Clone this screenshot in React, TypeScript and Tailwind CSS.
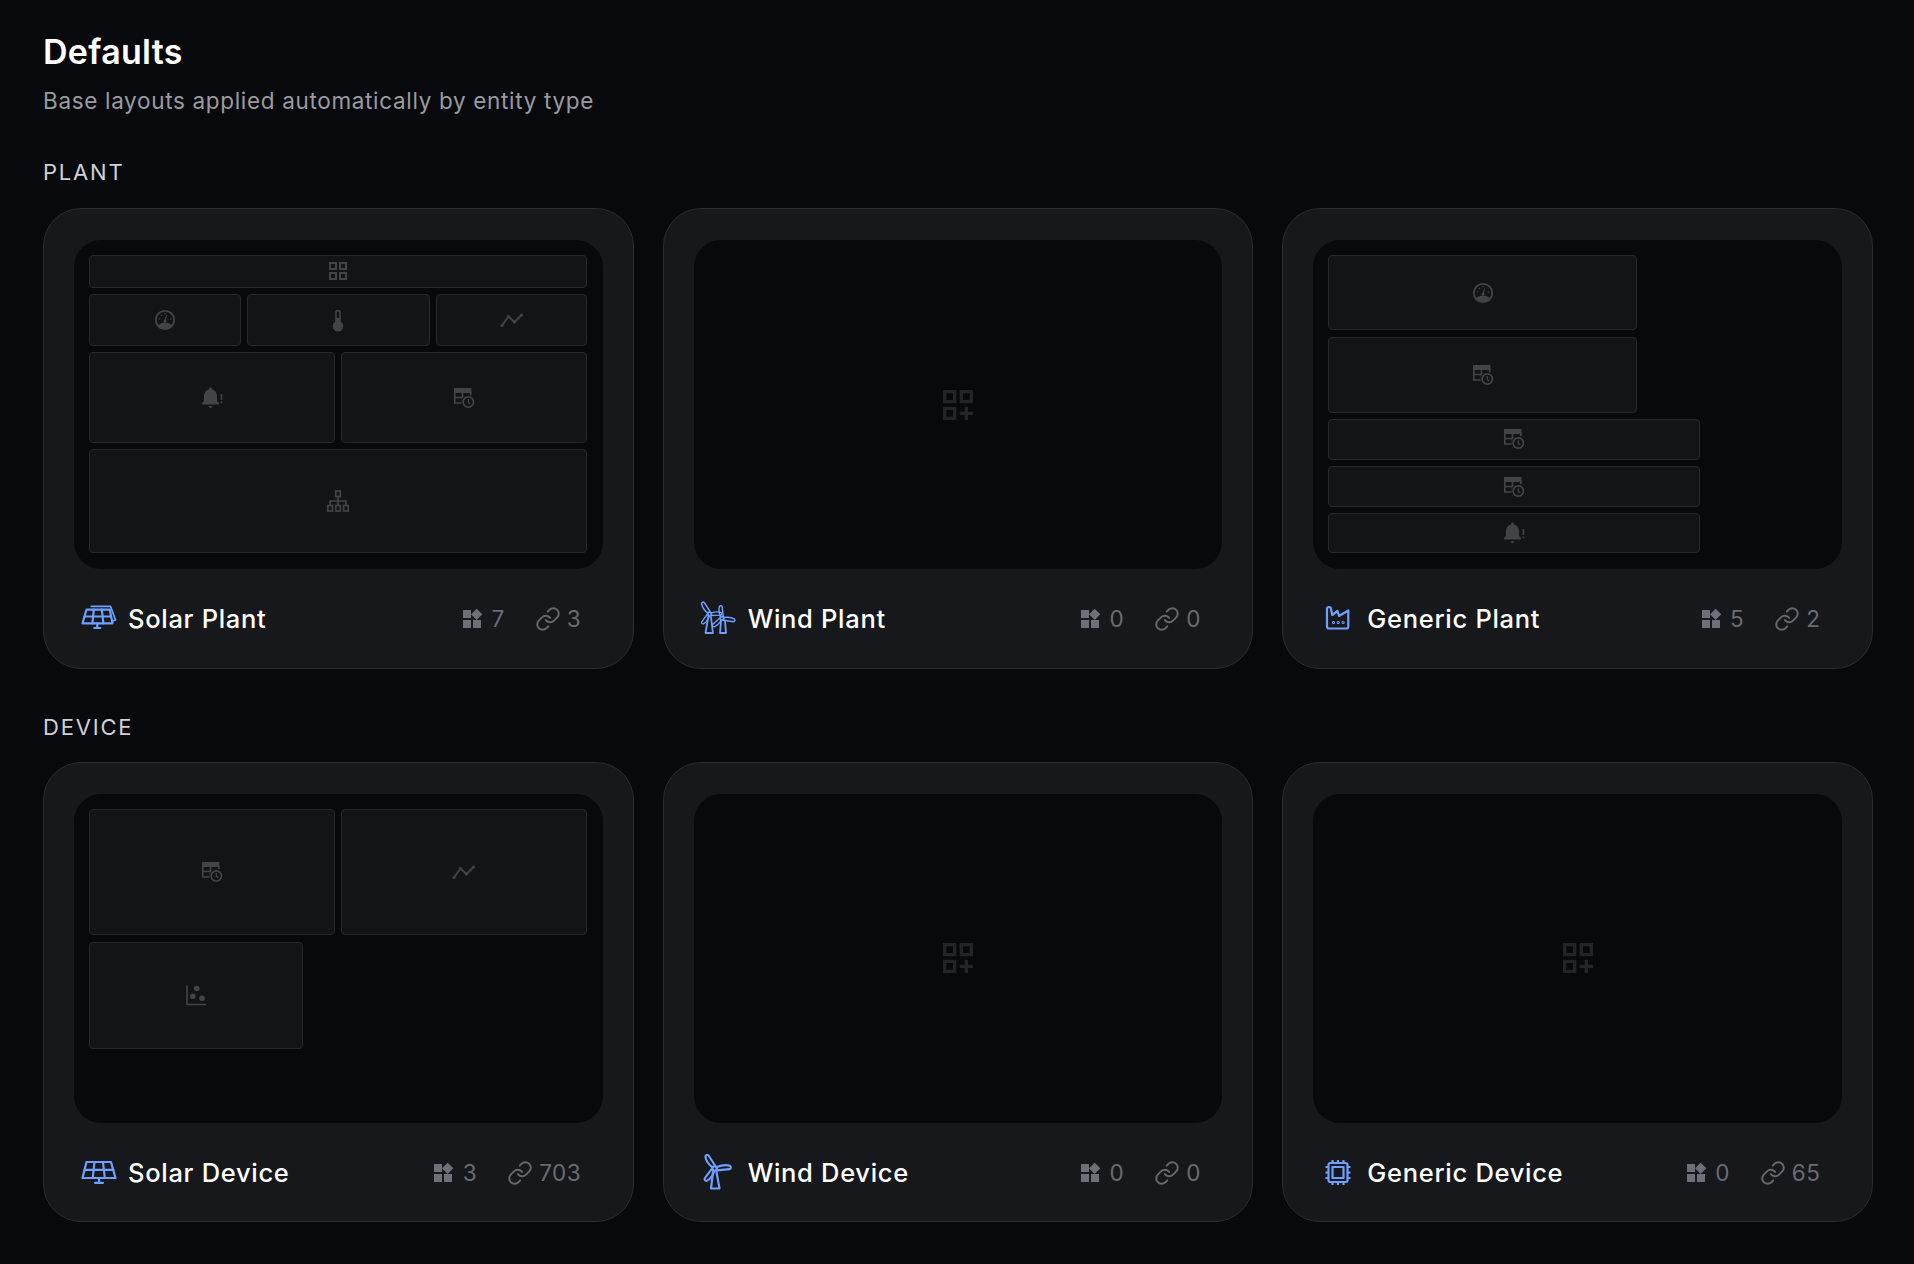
import React from "react";

const Svg = ({ children, size = 24, className = "" }: { children: React.ReactNode; size?: number; className?: string }) => (
  <svg viewBox="0 0 24 24" width={size} height={size} fill="currentColor" className={className}>{children}</svg>
);

const GridView = () => (
  <Svg><path d="M3 3v8h8V3H3zm6 6H5V5h4v4zm-6 4v8h8v-8H3zm6 6H5v-4h4v4zm4-16v8h8V3h-8zm6 6h-4V5h4v4zm-6 4v8h8v-8h-8zm6 6h-4v-4h4v4z" /></Svg>
);
const Gauge = () => (
  <Svg>
    <circle cx="12" cy="12" r="9.200" fill="none" stroke="currentColor" strokeWidth="1.800" />
    <path d="M5.200 17.600c1.600-2 4-3.200 6.800-3.200s5.200 1.200 6.800 3.200A9 9 0 0 1 12 21a9 9 0 0 1-6.800-3.400z" />
    <path d="M11.200 12.500l2.200-5.500 .8.300-1.600 5.700z" />
    <circle cx="12" cy="13" r="1.500" />
    <circle cx="6.500" cy="11" r=".8" /><circle cx="8.500" cy="7.500" r=".8" /><circle cx="12" cy="5.800" r=".8" /><circle cx="17.500" cy="11" r=".8" />
  </Svg>
);
const Thermo = () => (
  <Svg>
    <path fillRule="evenodd" d="M12 1.800a2.800 2.800 0 0 1 2.800 2.800v9.100a5.300 5.300 0 1 1-5.600 0V4.600A2.800 2.800 0 0 1 12 1.800zm0 1.600a1.200 1.200 0 0 0-1.200 1.200V10h2.400V4.600A1.200 1.200 0 0 0 12 3.400z" />
  </Svg>
);
const Trend = () => (
  <Svg>
    <path d="M2 17.500L8.500 8.500l6 5.500L21.500 7" fill="none" stroke="currentColor" strokeWidth="2" />
    <circle cx="2" cy="17.500" r="1.600" /><circle cx="8.500" cy="8.500" r="1.600" /><circle cx="14.500" cy="14" r="1.600" /><circle cx="21.500" cy="7" r="1.600" />
  </Svg>
);
const BellAlert = () => (
  <Svg>
    <path d="M10.500 1.500c.8 0 1.500.7 1.500 1.500v.5c2.900.7 5 3.300 5 6.400V15l2 2v1.500H2V17l2-2V9.900c0-3.100 2.100-5.700 5-6.400V3c0-.8.7-1.500 1.500-1.500zM8.500 20h4a2 2 0 0 1-4 0z" />
    <rect x="20.600" y="8" width="1.700" height="6" /><rect x="20.600" y="15.500" width="1.700" height="1.800" />
  </Svg>
);
const TableClock = () => (
  <Svg>
    <path d="M2 2h17.400v5H2z" />
    <path d="M2.800 5.500v11.500h9M18.700 5.500v4M10.500 5.500v11.500M2.800 11.500h15" fill="none" stroke="currentColor" strokeWidth="1.700" />
    <circle cx="16.300" cy="16" r="6.900" fill="#121418" />
    <circle cx="16.300" cy="16" r="5.200" fill="none" stroke="currentColor" strokeWidth="1.700" />
    <path d="M16.300 13v3.300l2 1.500" fill="none" stroke="currentColor" strokeWidth="1.300" />
  </Svg>
);
const Sitemap = () => (
  <Svg>
    <g fill="none" stroke="currentColor" strokeWidth="1.700">
      <rect x="9.700" y="2" width="4.600" height="5.500" />
      <rect x="1.800" y="16.500" width="4.600" height="5.500" />
      <rect x="9.700" y="16.500" width="4.600" height="5.500" />
      <rect x="17.600" y="16.500" width="4.600" height="5.500" />
      <path d="M12 7.500v9M4.100 16.500V12h15.800v4.500" />
    </g>
  </Svg>
);
const Scatter = () => (
  <Svg>
    <path d="M3 2.500v19h19" fill="none" stroke="currentColor" strokeWidth="1.700" />
    <circle cx="12.700" cy="5.500" r="2.800" /><circle cx="8.800" cy="13.300" r="2.800" /><circle cx="18" cy="15.300" r="2.800" />
  </Svg>
);

const Widgets = () => (
  <Svg className="shrink-0"><path d="M13 13v8h8v-8h-8zM3 21h8v-8H3v8zM3 3v8h8V3H3zm13.660-1.310L11 7.340 16.660 13l5.660-5.660-5.660-5.650z" /></Svg>
);
const LinkIco = () => (
  <svg viewBox="0 0 24 24" width={26} height={26} fill="none" stroke="currentColor" strokeWidth={1.8} strokeLinecap="round" strokeLinejoin="round" className="shrink-0">
    <path d="M10 13a5 5 0 0 0 7.540.54l3-3a5 5 0 0 0-7.070-7.070l-1.720 1.710" />
    <path d="M14 11a5 5 0 0 0-7.540-.54l-3 3a5 5 0 0 0 7.070 7.070l1.710-1.710" />
  </svg>
);

const Box = ({ children }: { children: React.ReactNode }) => (
  <svg viewBox="0 0 38 38" width={38} height={38} fill="none" stroke="currentColor" strokeWidth={2.2} strokeLinejoin="round" strokeLinecap="round" className="shrink-0 text-[#70a0ff]">{children}</svg>
);

const SolarDevice = () => (
  <Box>
    <path d="M6.500 8h24.500l4.500 16H2.500z" />
    <path d="M4.500 15.800h29M14.500 8l-1.800 16M23 8l1.800 16M19 24v4.500M15 28.800h8" />
  </Box>
);
const SolarPlant = () => (
  <Box>
    <path d="M6.500 9.700h23.300l2.700 13.600H2.500z" />
    <path d="M4.500 16.500h26.500M13.800 9.700l-1.400 13.600M21.800 9.700l1.600 13.600M17.300 23.300v4.400M14.300 28h6" />
    <path d="M11.300 6.300h19.200l5 13.700-3 1" strokeWidth={1.700} />
  </Box>
);

const Blade = ({ x, y, a, l }: { x: number; y: number; a: number; l: number }) => (
  <path
    transform={`translate(${x} ${y}) rotate(${a}) scale(${l / 16})`}
    d="M-1.500 -2.500C-3 -7 -3.200 -12 -1.800 -15.500C-.5 -16.800 1.200 -16.200 1.600 -14.800L2 -2.500"
  />
);
const WindDevice = () => (
  <Box>
    <Blade x={15.600} y={14.600} a={-31} l={15.500} />
    <Blade x={15.600} y={14.600} a={86} l={16} />
    <Blade x={15.600} y={14.600} a={219} l={15} />
    <circle cx="15.600" cy="14.600" r="2.200" />
    <path d="M14 18l-2 16.500h8.500L17.500 18" />
  </Box>
);
const WindPlant = () => (
  <Box>
    <g strokeWidth={1.800}>
      <Blade x={10.600} y={14} a={-31} l={13.500} />
      <Blade x={10.600} y={14} a={90} l={12} />
      <Blade x={10.600} y={14} a={219} l={12} />
      <circle cx="10.600" cy="14" r="1.800" />
      <path d="M9.300 17l-2.800 16h7.400L12 17" />
      <Blade x={22.900} y={18.300} a={-5} l={12.500} />
      <Blade x={22.900} y={18.300} a={100} l={13} />
      <Blade x={22.900} y={18.300} a={230} l={12} />
      <circle cx="22.900" cy="18.300" r="1.800" />
      <path d="M22 21l-1 12h6l-1-12" />
    </g>
  </Box>
);
const Factory = () => (
  <Box>
    <path d="M8 9a2 2 0 0 1 4 0l1.200 6 5.300-4 1.500 5 9.300-5.500v16a2 2 0 0 1-2 2H10a2 2 0 0 1-2-2z" />
    <circle cx="14.400" cy="22.500" r=".5" /><circle cx="19.200" cy="22.500" r=".5" /><circle cx="24.100" cy="22.500" r=".5" />
  </Box>
);
const Chip = () => (
  <Box>
    <g strokeLinecap="butt">
      <rect x="9.500" y="9" width="19" height="19" rx="2" />
      <rect x="13.500" y="13" width="11" height="11" />
      <path d="M6.500 13h3M6.500 18.500h3M6.500 24h3M28.500 13h3M28.500 18.500h3M28.500 24h3M13.500 6v3M19 6v3M24.500 6v3M13.500 28v3M19 28v3M24.500 28v3" />
    </g>
  </Box>
);

const Empty = () => (
  <div className="flex flex-1 items-center justify-center text-[#222428]">
    <Svg size={40}><path d="M3 11h8V3H3v8zm2-6h4v4H5V5zm8-2v8h8V3h-8zm6 6h-4V5h4v4zM3 21h8v-8H3v8zm2-6h4v4H5v-4zm13-2h-2v3h-3v2h3v3h2v-3h3v-2h-3z" /></Svg>
  </div>
);

const W = ({ className, children }: { className: string; children: React.ReactNode }) => (
  <div className={`box-border flex items-center justify-center rounded-[4px] border-[1.5px] border-[#26282c] bg-[#121418] text-[#424448] ${className}`}>{children}</div>
);

const SolarPlantPreview = () => (
  <div className="flex flex-col gap-[6.67px] pl-[15px] pr-[15.5px] pt-[15.3px]">
    <W className="h-[32.4px] w-full"><GridView /></W>
    <div className="flex h-[51.4px] gap-[6.67px]">
      <W className="w-[151.7px]"><Gauge /></W>
      <W className="w-[182.2px]"><Thermo /></W>
      <W className="flex-1"><Trend /></W>
    </div>
    <div className="flex h-[90.4px] gap-[6.67px]">
      <W className="flex-1"><BellAlert /></W>
      <W className="flex-1"><TableClock /></W>
    </div>
    <W className="h-[103.4px] w-full"><Sitemap /></W>
  </div>
);
const GenericPlantPreview = () => (
  <div className="flex flex-col gap-[6.67px] pl-[15px] pr-[15.5px] pt-[15.3px]">
    <W className="h-[75px] w-[308.5px]"><Gauge /></W>
    <W className="h-[75.7px] w-[308.5px]"><TableClock /></W>
    <W className="h-[40.4px] w-[371.3px]"><TableClock /></W>
    <W className="h-[40.4px] w-[371.3px]"><TableClock /></W>
    <W className="h-[39.7px] w-[371.3px]"><BellAlert /></W>
  </div>
);
const SolarDevicePreview = () => (
  <div className="flex flex-col gap-[6.67px] pl-[15px] pr-[15.5px] pt-[15.3px]">
    <div className="flex h-[126px] gap-[6.67px]">
      <W className="flex-1"><TableClock /></W>
      <W className="flex-1"><Trend /></W>
    </div>
    <W className="h-[107px] w-[214.3px]"><Scatter /></W>
  </div>
);

const Card = ({ icon, title, blocks, links, preview }: { icon: React.ReactNode; title: string; blocks: string; links: string; preview: React.ReactNode }) => (
  <div className="box-border flex h-[460.7px] flex-col rounded-[38px] border-[1.5px] border-[#2a2c30] bg-[#16181c] px-[30px] pt-[31px]">
    <div className="flex h-[329px] shrink-0 flex-col rounded-[27px] bg-[#08090d]">{preview}</div>
    <div className="flex h-[99px] items-center justify-between pl-[5.5px] pr-[21.5px] pt-[2px]">
      <div className="flex items-center gap-[10.5px]">
        {icon}
        <span className="text-[25.5px] leading-[32px] font-medium tracking-[0.7px] text-white">{title}</span>
      </div>
      <div className="flex items-center gap-[30px] text-[22.5px] leading-[28px] tracking-[0.5px] text-[#6a6c72]">
        <div className="flex items-center gap-[7.5px]"><span className="text-[#6f7077]"><Widgets /></span><span>{blocks}</span></div>
        <div className="flex items-center gap-[6px]"><span className="text-[#66686d]"><LinkIco /></span><span>{links}</span></div>
      </div>
    </div>
  </div>
);

const Label = ({ children, className }: { children: string; className: string }) => (
  <div className={`mt-[44px] text-[22px] leading-[28px] tracking-[1.8px] text-[#d0d1d4] uppercase ${className}`}>{children}</div>
);

export default function App() {
  return (
    <div className="box-border min-h-[1264px] bg-[#08090d] pl-[43px] pr-[41px] pt-[32px] [font-family:Inter,'Liberation_Sans',sans-serif]">
      <h1 className="text-[34px] leading-[40px] font-semibold tracking-[0.3px] text-white">Defaults</h1>
      <p className="mt-[15px] text-[22.5px] leading-[27px] tracking-[0.67px] text-[#9a9ba0]">Base layouts applied automatically by entity type</p>
      <Label className="mb-[22px]">Plant</Label>
      <div className="grid grid-cols-3 gap-[29px]">
        <Card icon={<SolarPlant />} title="Solar Plant" blocks="7" links="3" preview={<SolarPlantPreview />} />
        <Card icon={<WindPlant />} title="Wind Plant" blocks="0" links="0" preview={<Empty />} />
        <Card icon={<Factory />} title="Generic Plant" blocks="5" links="2" preview={<GenericPlantPreview />} />
      </div>
      <Label className="mb-[21px]">Device</Label>
      <div className="grid grid-cols-3 gap-[29px]">
        <Card icon={<SolarDevice />} title="Solar Device" blocks="3" links="703" preview={<SolarDevicePreview />} />
        <Card icon={<WindDevice />} title="Wind Device" blocks="0" links="0" preview={<Empty />} />
        <Card icon={<Chip />} title="Generic Device" blocks="0" links="65" preview={<Empty />} />
      </div>
    </div>
  );
}
